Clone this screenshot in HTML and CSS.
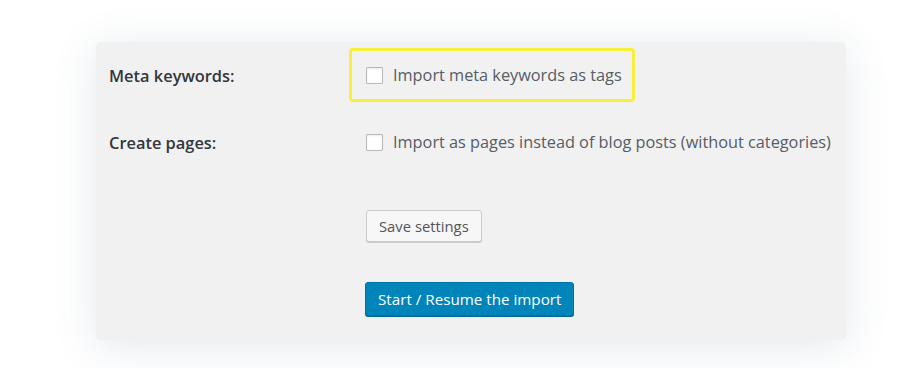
FILE: index.html
```html
<!DOCTYPE html>
<html>

<head>
    <meta charset="utf-8" />
    <meta name="viewport" content="width=device-width, initial-scale=1.0" />
    <title>Import settings</title>
    <link rel="stylesheet" href="styles.css">
</head>

<body>
    <div class="panel">
        <div class="row">
            <div class="row-label">Meta keywords:</div>
            <label class="option option-marked">
                <input type="checkbox" class="check">
                <span>Import meta keywords as tags</span>
            </label>
        </div>
        <div class="row row-second">
            <div class="row-label">Create pages:</div>
            <label class="option">
                <input type="checkbox" class="check">
                <span>Import as pages instead of blog posts (without categories)</span>
            </label>
        </div>
        <div class="actions">
            <button type="button" class="btn btn-secondary">Save settings</button>
            <button type="button" class="btn btn-primary">Start / Resume the import</button>
        </div>
    </div>
</body>

</html>
```

FILE: styles.css
```css
/* Общие стили */
body {
    margin: 0;
    padding: 42px 74px 28px 96px;
    background-color: #ffffff;
    font-family: 'Open Sans', 'Noto Sans', sans-serif;
    color: #23282d;
}

.panel {
    height: 298px;
    box-sizing: border-box;
    padding: 6px 13px 24px 13px;
    background-color: #f1f1f1;
    border-radius: 5px;
    box-shadow: 0 6px 44px rgba(60, 90, 130, 0.14);
}

.row {
    display: flex;
    align-items: center;
}

.row-second {
    margin-top: 13px;
}

.row-label {
    flex: 0 0 240px;
    font-size: 16.4px;
    font-weight: 600;
    color: #32373c;
}

.option {
    flex-shrink: 0;
    display: flex;
    align-items: center;
    padding: 14px 10px 14px 14px;
    border: 3px solid transparent;
    border-radius: 4px;
    font-size: 16.3px;
    line-height: 20px;
    color: #555d66;
    white-space: nowrap;
}

.option-marked {
    border-color: #f6f03a;
}

.check {
    flex-shrink: 0;
    appearance: none;
    -webkit-appearance: none;
    width: 17px;
    height: 17px;
    margin: 0 10px 0 0;
    background: #fff;
    border: 1px solid #b4b9be;
    border-radius: 1px;
    box-shadow: inset 0 1px 2px rgba(0, 0, 0, 0.08);
}

.actions {
    display: flex;
    flex-direction: column;
    align-items: flex-start;
    padding-left: 256px;
}

.btn {
    font-family: inherit;
    border-radius: 3px;
    cursor: pointer;
}

.btn-secondary {
    margin-top: 41px;
    margin-left: 1px;
    height: 32px;
    padding: 0 12px;
    font-size: 14.8px;
    color: #555;
    background: #f7f7f7;
    border: 1px solid #cccccc;
    box-shadow: 0 1px 0 #cccccc;
}

.btn-primary {
    margin-top: 40px;
    height: 34px;
    padding: 0 12px;
    font-size: 15.2px;
    color: #fff;
    background: #0085ba;
    border: 1px solid #0073aa;
    box-shadow: 0 1px 0 #006799;
}
```
